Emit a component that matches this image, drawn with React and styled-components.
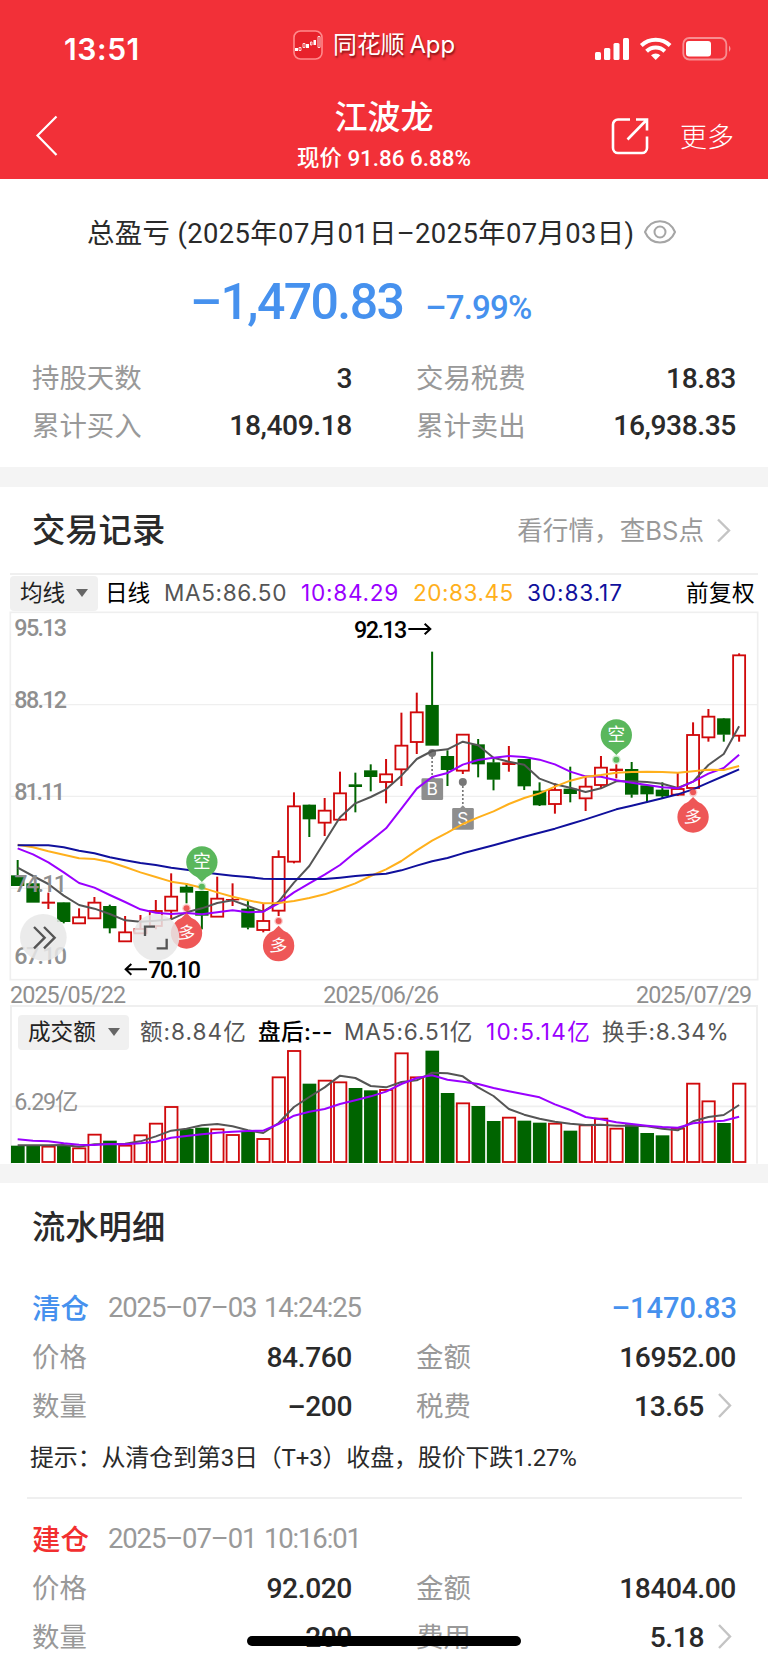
import React from 'react';
import styled, { createGlobalStyle } from "styled-components";

const red = '#f23038';
const up = '#d0090b';
const down = '#006400';
const blue = '#4691ee';
const ink = '#2a2a2a';
const muted = '#999';
const line = '#efefef';
const ma5 = '#555';
const ma10 = '#9a00ff';
const ma20 = '#ffb01c';
const ma30 = '#10109c';

const numberFont = 'Roboto, "Noto Sans CJK SC", sans-serif';
const systemFont = 'Inter, "Noto Sans CJK SC", sans-serif';

const GlobalStyle = createGlobalStyle`
    * {
        box-sizing: border-box;
    }
    body {
        margin: 0;
        background: #fff;
    }
`;

const Page = styled.div`
    position: relative;
    display: flex;
    flex-direction: column;
    width: 768px;
    height: 1663px;
    overflow: hidden;
    background: #fff;
    color: ${ink};
    font-family: ${numberFont};
`;

const Header = styled.header`
    height: 179px;
    flex: none;
    background: ${red};
    color: #fff;
`;

const StatusBar = styled.div`
    display: grid;
    grid-template-columns: 293px 1fr 174px;
    align-items: center;
    height: 90px;
    padding-top: 8px;
`;

const Clock = styled.div`
    padding-left: 64px;
    font: 600 30px/40px ${systemFont};
    letter-spacing: 0.6px;
`;

const AppTag = styled.div`
    display: flex;
    align-items: center;
    gap: 10px;
    margin-top: -8px;
    font: 400 23.9px/32px ${systemFont};
    word-spacing: -2px;
    text-shadow: 1px 2px 2px rgba(60, 0, 0, 0.6);
`;

const NavBar = styled.div`
    display: grid;
    grid-template-columns: 200px 1fr 200px;
    height: 89px;
`;

const BackIcon = styled.svg`
    width: 24px;
    height: 42px;
    margin: 25px 0 0 35px;
`;

const NavTitle = styled.div`
    display: flex;
    flex-direction: column;
    align-items: center;
`;

const StockName = styled.div`
    margin-top: 6px;
    font-size: 33px;
    font-weight: 500;
    line-height: 44px;
`;

const StockPrice = styled.div`
    margin-top: 2px;
    font-size: 22.4px;
    font-weight: 500;
    line-height: 32px;
    white-space: nowrap;
`;

const NavActions = styled.div`
    display: flex;
    align-items: center;
    gap: 31px;
    height: 91px;
    padding-left: 43px;
    font-size: 27px;
    font-weight: 300;
`;

const Divider = styled.div`
    flex: none;
    height: ${({ $size }) => $size}px;
    background: #f4f4f4;
`;

const Summary = styled.section`
    flex: none;
    height: 288px;
    padding: 32px 32px 0 32px;
`;

const Period = styled.div`
    display: flex;
    align-items: center;
    gap: 8px;
    height: 40px;
    margin-left: 55px;
    font-size: 27.4px;
    letter-spacing: 0.38px;
    white-space: nowrap;
`;

const EyeIcon = styled.svg`
    width: 34px;
    height: 26px;
    margin-top: 2px;
`;

const Totals = styled.div`
    display: flex;
    align-items: baseline;
    gap: 22px;
    height: 103px;
    padding: 3px 0 0 158px;
    color: ${blue};
`;

const Total = styled.span`
    font-size: 50px;
    font-weight: 500;
    letter-spacing: -1.6px;
    line-height: 96px;
`;

const Percent = styled.span`
    font-size: 33px;
    font-weight: 500;
    letter-spacing: -0.8px;
`;

const Pairs = styled.div`
    display: grid;
    grid-template-columns: 320px 320px;
    column-gap: 64px;
    grid-auto-rows: ${({ $row }) => $row}px;
    align-items: center;
`;

const Pair = styled.div`
    display: flex;
    align-items: center;
    justify-content: space-between;
`;

const Label = styled.span`
    padding-bottom: 3px;
    color: ${muted};
    font-size: 27.4px;
`;

const Value = styled.span`
    margin-left: auto;
    padding-top: 1px;
    font-size: 28.2px;
    font-weight: 500;
    letter-spacing: -0.4px;
`;

const SectionHead = styled.div`
    display: flex;
    flex: none;
    align-items: center;
    justify-content: space-between;
    height: 86px;
    padding: 0 37px 0 32px;
`;

const SectionTitle = styled.h2`
    margin: 0;
    padding-bottom: 5px;
    font-size: 33.3px;
    font-weight: 500;
`;

const More = styled.div`
    display: flex;
    align-items: center;
    gap: 13px;
    padding-top: 1px;
    color: ${muted};
    font: 400 25.6px/36px ${systemFont};
`;

const ChartArea = styled.section`
    flex: none;
    height: 591px;
`;

const Toolbar = styled.div`
    display: flex;
    align-items: center;
    height: 38px;
    margin: 0 10px;
    border-top: 2px solid ${line};
    font: 400 22.6px/34px ${systemFont};
    white-space: nowrap;
`;

const VolumeToolbar = styled(Toolbar)`
    height: 45px;
    margin-top: 1px;
    padding: 7px 0 0 6px;
    border: 2px solid ${line};
    border-bottom: 0;
`;

const Picker = styled.span`
    display: flex;
    align-items: center;
    gap: ${({ $gap = 11 }) => $gap}px;
    width: ${({ $width }) => $width}px;
    height: 35px;
    margin-right: ${({ $after }) => $after}px;
    padding-left: 10px;
    border-radius: 4px;
    background: #f0f0f0;
    color: #222;
`;

const Caret = styled.i`
    border: 6.5px solid transparent;
    border-top: 8px solid #666;
    border-bottom: 0;
`;

const Legend = styled.span`
    width: ${({ $width }) => $width}px;
    color: ${({ $color }) => $color};
    font-weight: ${({ $strong }) => ($strong ? 500 : 400)};
    letter-spacing: ${({ $spacing = 0 }) => $spacing}px;
`;

const Plot = styled.svg`
    display: block;
    width: 768px;
    height: ${({ $height }) => $height}px;
    overflow: visible;
`;

const Flow = styled.section`
    flex: none;
`;

const FlowHead = styled(SectionHead)`
    height: 87px;
`;

const Deal = styled.article`
    padding: ${({ $first }) => ($first ? 11 : 13)}px 32px 0 32px;
`;

const DealHead = styled.div`
    display: flex;
    align-items: center;
    height: 50px;
    margin-bottom: 1px;
`;

const Action = styled.span`
    width: 76px;
    color: ${({ $color }) => $color};
    font-size: 28.5px;
    font-weight: 500;
`;

const Time = styled.span`
    padding-top: 2px;
    color: ${muted};
    font-size: 27.5px;
    letter-spacing: -1.15px;
    word-spacing: 2px;
`;

const Profit = styled(Value)`
    margin-right: -1px;
    padding-top: 4px;
    color: ${blue};
    font-size: 29px;
    letter-spacing: 0;
`;

const Arrow = styled.svg`
    width: 15px;
    height: 25px;
    margin-left: 13px;
    margin-right: 4px;
`;

const Tip = styled.p`
    height: 69px;
    margin: 0 -6px 0 -5px;
    padding: 7px 0 0 3px;
    border-bottom: 2px solid ${line};
    font-size: 24px;
    letter-spacing: -0.17px;
    line-height: 42px;
    white-space: nowrap;
`;

const HomeBar = styled.div`
    position: absolute;
    left: 247px;
    bottom: 17px;
    width: 274px;
    height: 10px;
    border-radius: 5px;
    background: #000;
`;

// Both plots are drawn on a grid three times finer than the page.
const STEP = 46.05;
const xAt = (i) => 53 + i * STEP;

// [rising, high, body top, body bottom, low]
const candles = [
    [0, 360, 407, 437, 437], [0, 430, 431, 487, 487], [1, 458, 486, 490, 507], [0, 487, 488, 545, 550],
    [1, 505, 532, 550, 550], [1, 471, 488, 535, 535], [0, 494, 499, 564, 580], [1, 528, 577, 604, 604],
    [1, 525, 567, 580, 580], [1, 480, 513, 558, 568], [1, 400, 470, 512, 538], [0, 430, 441, 457, 490],
    [0, 453, 454, 526, 568], [1, 410, 476, 530, 530], [1, 430, 478, 480, 498], [0, 480, 507, 562, 568],
    [1, 492, 543, 570, 577], [1, 331, 351, 512, 528], [1, 157, 199, 365, 370], [0, 194, 195, 237, 291],
    [1, 174, 212, 248, 288], [1, 95, 160, 239, 242], [0, 98, 134, 140, 217], [0, 73, 92, 110, 154],
    [1, 57, 103, 126, 190], [1, -82, 17, 88, 138], [1, -142, -83, 6, 42], [0, -265, -104, 16, 16],
    [0, 31, 49, 89, 138], [1, -17, -16, 92, 102], [0, -3, 14, 72, 112], [0, 55, 68, 118, 151],
    [1, 18, 68, 74, 95], [0, 57, 58, 138, 150], [0, 127, 153, 195, 198], [1, 130, 150, 192, 221],
    [0, 80, 147, 161, 187], [1, 110, 140, 175, 213], [1, 48, 83, 135, 145], [1, 73, 87, 92, 115],
    [0, 66, 88, 163, 173], [0, 136, 137, 162, 188], [0, 127, 150, 168, 175], [1, 98, 147, 164, 168],
    [1, -53, -15, 144, 146], [1, -93, -70, -8, 5], [0, -66, -64, -17, 5], [1, -260, -254, -13, 5]
];

const priceLines = [
    [ma5, [383, 408, 432, 467, 495, 506, 522, 541, 545, 542, 538, 517, 505, 489, 481, 498, 515, 485, 428, 378, 305, 232, 190, 171, 148, 107, 57, 33, 28, 5, 16, 53, 65, 74, 116, 133, 143, 156, 145, 124, 124, 126, 131, 144, 125, 75, 42, -41]],
    [ma10, [325, 343, 367, 397, 429, 443, 465, 486, 508, 518, 522, 519, 523, 517, 511, 517, 515, 490, 457, 430, 404, 375, 337, 302, 265, 206, 146, 111, 99, 74, 60, 53, 48, 51, 59, 73, 95, 109, 110, 121, 128, 135, 142, 145, 125, 101, 84, 44]],
    [ma20, [314, 322, 334, 344, 355, 357, 366, 381, 397, 411, 425, 432, 443, 457, 470, 481, 490, 489, 483, 474, 463, 447, 430, 408, 388, 363, 331, 302, 278, 252, 232, 214, 192, 174, 160, 140, 122, 110, 105, 98, 96, 95, 96, 98, 94, 89, 90, 78]],
    [ma30, [316, 316, 316, 322, 332, 340, 352, 361, 369, 375, 383, 389, 396, 402, 407, 411, 416, 417, 417, 417, 417, 413, 408, 404, 401, 391, 377, 364, 354, 340, 328, 316, 303, 290, 278, 266, 252, 238, 223, 208, 197, 186, 175, 163, 148, 128, 108, 88]]
];

const volumes = [
    438, 438, 440, 438, 445, 404, 423, 437, 406, 371, 321, 388, 384, 388, 405, 397,
    417, 232, 153, 252, 242, 247, 265, 272, 270, 160, 232, 153, 280, 310, 319, 364,
    353, 363, 369, 371, 393, 376, 356, 386, 374, 400, 407, 386, 251, 304, 370, 251
];

const volumeLines = [
    [ma5, [436, 436, 436, 435, 440, 433, 432, 431, 424, 409, 392, 386, 376, 372, 379, 391, 399, 369, 321, 291, 262, 227, 234, 258, 262, 246, 241, 218, 220, 229, 262, 288, 327, 344, 356, 365, 371, 375, 374, 377, 377, 379, 386, 391, 364, 351, 345, 315]],
    [ma10, [418, 422, 424, 430, 434, 435, 432, 433, 430, 425, 413, 408, 403, 398, 395, 393, 392, 372, 347, 335, 327, 312, 301, 289, 275, 252, 234, 226, 239, 245, 252, 264, 274, 283, 292, 313, 330, 351, 358, 367, 372, 377, 381, 383, 370, 365, 362, 350]]
];

const Average = ({ color, points }) => (
    <polyline
        fill="none"
        stroke={color}
        strokeWidth="6"
        strokeLinejoin="round"
        points={points.map((y, i) => `${xAt(i)},${y}`).join(' ')}
    />
);

const Candle = ({ x, data }) => {
    const [rising, high, top, bottom, low] = data;
    const color = rising ? up : down;
    const hollow = rising && bottom - top > 8;

    return (
        <g stroke={color} strokeWidth="6">
            {high < top && <line x1={x} x2={x} y1={high} y2={top} />}
            {low > bottom && <line x1={x} x2={x} y1={bottom} y2={low} />}
            {hollow
                ? <rect x={x - 18} y={top} width="36" height={bottom - top} fill="none" strokeWidth="5.5" />
                : <rect x={x - 20} y={top - 1} width="40" height={bottom - top + 2} fill={color} stroke="none" />}
        </g>
    );
};

const Pin = ({ x, y, text }) => {
    const bull = text === '多';
    const color = bull ? '#ee5757' : '#5ab75c';
    const dir = bull ? 1 : -1;
    const cy = y + dir * 74;

    return (
        <g fill={color}>
            <circle cx={x} cy={y} r="13" opacity="0.3" />
            <circle cx={x} cy={y} r="9" />
            <circle cx={x} cy={cy} r="47" />
            <path d={`M${x - 22} ${cy - dir * 38}L${x} ${y + dir * 14}L${x + 22} ${cy - dir * 38}Z`} />
            <text
                x={x}
                y={cy + 19}
                fill="#fff"
                fontSize="53"
                textAnchor="middle"
                transform={bull ? `rotate(8 ${x} ${cy})` : undefined}
            >
                {text}
            </text>
        </g>
    );
};

const Trade = ({ x, y, length, text }) => (
    <g>
        <circle cx={x} cy={y} r="12" fill="#777" />
        <line x1={x} x2={x} y1={y + 12} y2={y + length} stroke="#777" strokeWidth="5" strokeDasharray="6 6" />
        <path d={`M${x - 10} ${y + length + 2}l10 -10l10 10z`} fill="#8e8e8e" />
        <rect x={x - 32} y={y + length} width="65" height="65" rx="4" fill="#8e8e8e" />
        <text x={x} y={y + length + 50} fill="#fff" fontSize="52" fontFamily={systemFont} textAnchor="middle">{text}</text>
    </g>
);

const PriceChart = () => (
    <Plot $height={393} viewBox="0 -387 2304 1179" fontFamily={numberFont}>
        <g stroke={line} strokeWidth="5" fill="none">
            <rect x="31" y="-383" width="2242" height="1102" />
            <path d="M31 -106H2273M31 169H2273M31 445H2273" strokeWidth="4" />
        </g>
        {candles.map((data, i) => <Candle key={i} x={xAt(i)} data={data} />)}
        <Trade x={xAt(27)} y={39} length={76} text="B" />
        <Trade x={xAt(29)} y={126} length={78} text="S" />
        {priceLines.map(([color, points]) => <Average key={color} color={color} points={points} />)}
        <Pin x={xAt(11)} y={505} text="多" />
        <Pin x={xAt(12)} y={440} text="空" />
        <Pin x={xAt(17)} y={543} text="多" />
        <Pin x={xAt(39)} y={59} text="空" />
        <Pin x={xAt(44)} y={157} text="多" />
        <g fill="#8f8f8f" fontSize="70" fontWeight="500">
            <text x="43" y="-313" textLength="158">95.13</text>
            <text x="43" y="-96" textLength="158">88.12</text>
            <text x="43" y="180" textLength="153">81.11</text>
            <text x="43" y="455" textLength="158">74.11</text>
            <text x="43" y="672" textLength="158">67.10</text>
        </g>
        <g fill="#000" fontSize="70" fontWeight="500">
            <text x="1062" y="-307" textLength="160">92.13</text>
            <text x="445" y="713" textLength="158">70.10</text>
        </g>
        <g fill="none" stroke="#000" strokeWidth="6">
            <path d="M1225 -333H1290M1274 -349L1291 -333L1274 -317" />
            <path d="M441 688H377M394 672L377 688L394 704" />
        </g>
        <g fill="rgba(232, 232, 232, 0.86)">
            <circle cx="130" cy="592" r="70" />
            <circle cx="468" cy="592" r="70" />
        </g>
        <g fill="none" stroke="#555" strokeWidth="7">
            <path d="M102 561L134 593L102 625M132 561L164 593L132 625" />
            <path d="M465 560H435V588M470 625H500V596" />
        </g>
        <g fill="#8f8f8f" fontSize="70">
            <text x="30" y="790" textLength="348">2025/05/22</text>
            <text x="970" y="790" textLength="347">2025/06/26</text>
            <text x="1908" y="790" textLength="348">2025/07/29</text>
        </g>
    </Plot>
);

const VolumeChart = () => (
    <Plot $height={114} viewBox="0 150 2304 342" fontFamily={numberFont}>
        <path d="M33 150V491M2271 150V491M31 319H2273" fill="none" stroke={line} strokeWidth="5" />
        {volumes.map((top, i) => (candles[i][0]
            ? <rect key={i} x={xAt(i) - 18} y={top} width="37" height={486 - top} fill="none" stroke={up} strokeWidth="5.5" />
            : <rect key={i} x={xAt(i) - 20} y={top - 1} width="41" height={490 - top} fill={down} />
        ))}
        {volumeLines.map(([color, points]) => <Average key={color} color={color} points={points} />)}
        <text x="43" y="329" fill="#8f8f8f" fontSize="70" textLength="192">6.29亿</text>
    </Plot>
);

const RightArrow = () => (
    <Arrow viewBox="0 0 15 25" fill="none" stroke="#c4c4c4" strokeWidth="2.4">
        <path d="M2 1L13 12.5L2 24" />
    </Arrow>
);

const Field = ({ label, value, arrow }) => (
    <Pair>
        <Label>{label}</Label>
        <Value>{value}</Value>
        {arrow && <RightArrow />}
    </Pair>
);

const App = () => (
    <Page>
        <GlobalStyle />

        <Header>
            <StatusBar>
                <Clock>13:51</Clock>
                <AppTag>
                    <svg width="30" height="30" viewBox="0 0 30 30" fill="none">
                        <rect x="1" y="1" width="28" height="28" rx="6.5" fill="#e8222b" stroke="#ff8a8c" strokeWidth="1.6" />
                        <path d="M2 18h3v3H2zM13 14h3v4h-3zM20.500 10h2.500v5h-2.500z" fill="#fff" />
                        <path d="M6 17.500h2v3H6zM10 13.500h2v4h-2zM17.500 12h1.500v3h-1.500zM25 6.500h2v11h-2z" stroke="#fff" strokeWidth="0.8" />
                    </svg>
                    <span>同花顺 App</span>
                </AppTag>
                <svg width="142" height="26" viewBox="594 36 142 26">
                    <g fill="#fff">
                        <rect x="595" y="52" width="6" height="8" rx="1.500" />
                        <rect x="604" y="48" width="6.300" height="12" rx="1.500" />
                        <rect x="613.500" y="43" width="6" height="17" rx="1.500" />
                        <rect x="623" y="38" width="6" height="22" rx="1.500" />
                        <path d="M655.700 60L651 55.200A7 7 0 0 1 660.400 55.200Z" />
                        <rect x="686" y="41" width="25" height="15.500" rx="3" />
                    </g>
                    <g fill="none" stroke="#fff" strokeWidth="4">
                        <path d="M641.300 45.500A21 21 0 0 1 670.100 45.500" />
                        <path d="M646.600 51.300A13 13 0 0 1 664.800 51.300" />
                    </g>
                    <rect x="683.300" y="38" width="43" height="21.500" rx="6" fill="none" stroke="#fff" strokeOpacity="0.45" strokeWidth="1.800" />
                    <path d="M729 45.500Q732 48.500 729 52Z" fill="#fff" fillOpacity="0.5" />
                </svg>
            </StatusBar>

            <NavBar>
                <BackIcon viewBox="0 0 24 42" fill="none" stroke="#fff" strokeWidth="2.2">
                    <path d="M21.500 1.500L2.500 20.500L21.500 40" />
                </BackIcon>
                <NavTitle>
                    <StockName>江波龙</StockName>
                    <StockPrice>现价 91.86 6.88%</StockPrice>
                </NavTitle>
                <NavActions>
                    <svg width="38" height="38" viewBox="0 0 38 38" fill="none" stroke="#fff" strokeWidth="2.6">
                        <path d="M19 2.500H7A5 5 0 0 0 2 7.500V31A5 5 0 0 0 7 36H31A5 5 0 0 0 36 31V19.500" />
                        <path d="M25 2.500H36V13.500M36 2.500L16.500 22.500" />
                    </svg>
                    更多
                </NavActions>
            </NavBar>
        </Header>

        <Summary>
            <Period>
                总盈亏 (2025年07月01日–2025年07月03日)
                <EyeIcon viewBox="0 0 34 26" fill="none" stroke="#a5a5a5" strokeWidth="2">
                    <path d="M2 13C8 -1.500 26 -1.500 32 13C26 27 8 27 2 13Z" />
                    <circle cx="17" cy="13" r="5.500" />
                </EyeIcon>
            </Period>
            <Totals>
                <Total>–1,470.83</Total>
                <Percent>–7.99%</Percent>
            </Totals>
            <Pairs $row={47.5}>
                <Field label="持股天数" value="3" />
                <Field label="交易税费" value="18.83" />
                <Field label="累计买入" value="18,409.18" />
                <Field label="累计卖出" value="16,938.35" />
            </Pairs>
        </Summary>

        <Divider $size={20} />

        <SectionHead>
            <SectionTitle>交易记录</SectionTitle>
            <More>
                看行情，查BS点
                <svg width="14" height="25" viewBox="0 0 14 25" fill="none" stroke="#c4c4c4" strokeWidth="2.4">
                    <path d="M1 1.500L12 12.500L1 23.500" />
                </svg>
            </More>
        </SectionHead>

        <ChartArea>
            <Toolbar>
                <Picker $width={88} $after={7}>均线<Caret /></Picker>
                <Legend $width={59} $color="#000">日线</Legend>
                <Legend $width={137} $color={ma5} $spacing={0.6}>MA5:86.50</Legend>
                <Legend $width={112} $color={ma10} $spacing={0.75}>10:84.29</Legend>
                <Legend $width={114} $color={ma20} $spacing={0.5}>20:83.45</Legend>
                <Legend $width={159} $color={ma30} $spacing={0.9}>30:83.17</Legend>
                <Legend $width={70} $color="#000" $spacing={0.4}>前复权</Legend>
            </Toolbar>
            <PriceChart />
            <VolumeToolbar>
                <Picker $width={111} $after={11} $gap={12}>成交额<Caret /></Picker>
                <Legend $width={118} $color={ma5} $spacing={1}>额:8.84亿</Legend>
                <Legend $width={86} $color="#000" $strong $spacing={0.4}>盘后:--</Legend>
                <Legend $width={142} $color={ma5} $spacing={0.9}>MA5:6.51亿</Legend>
                <Legend $width={116} $color={ma10} $spacing={1.4}>10:5.14亿</Legend>
                <Legend $width={130} $color={ma5} $spacing={0.7}>换手:8.34%</Legend>
            </VolumeToolbar>
            <VolumeChart />
        </ChartArea>

        <Divider $size={19} />

        <Flow>
            <FlowHead>
                <SectionTitle>流水明细</SectionTitle>
            </FlowHead>
            <Deal $first>
                <DealHead>
                    <Action $color={blue}>清仓</Action>
                    <Time>2025–07–03 14:24:25</Time>
                    <Profit>–1470.83</Profit>
                </DealHead>
                <Pairs $row={49}>
                    <Field label="价格" value="84.760" />
                    <Field label="金额" value="16952.00" />
                    <Field label="数量" value="–200" />
                    <Field label="税费" value="13.65" arrow />
                </Pairs>
                <Tip>提示：从清仓到第3日（T+3）收盘，股价下跌1.27%</Tip>
            </Deal>
            <Deal>
                <DealHead>
                    <Action $color="#f22f30">建仓</Action>
                    <Time>2025–07–01 10:16:01</Time>
                </DealHead>
                <Pairs $row={49}>
                    <Field label="价格" value="92.020" />
                    <Field label="金额" value="18404.00" />
                    <Field label="数量" value="200" />
                    <Field label="费用" value="5.18" arrow />
                </Pairs>
            </Deal>
        </Flow>

        <HomeBar />
    </Page>
);

export default App;
